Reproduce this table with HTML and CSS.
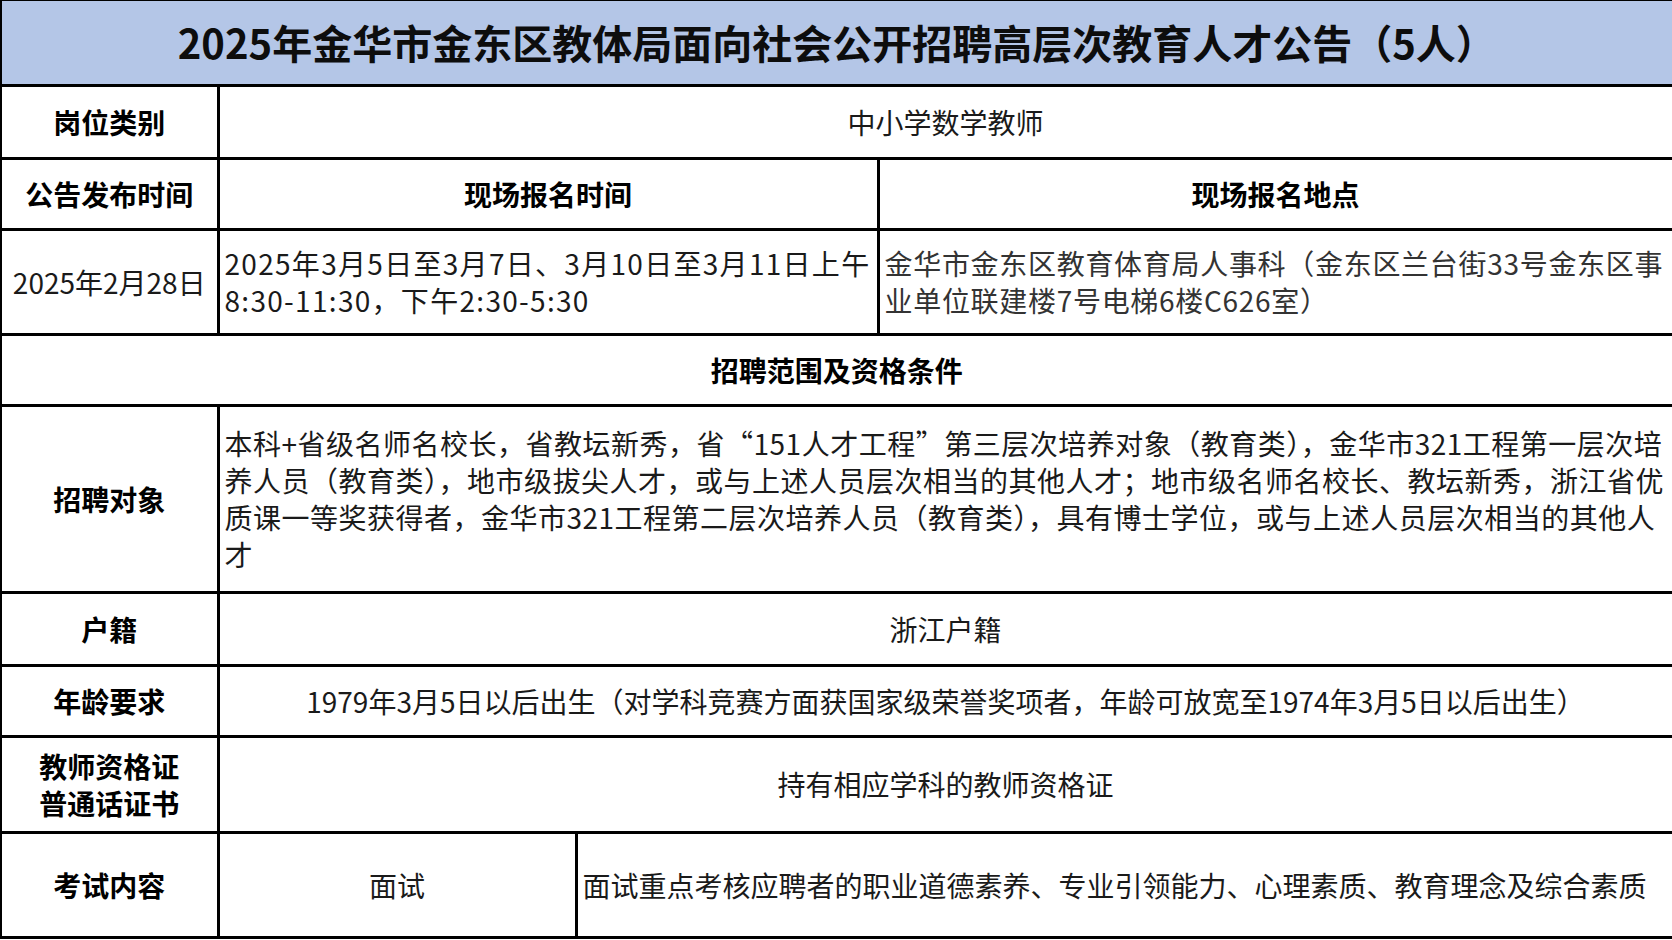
FILE: index.html
```html
<!DOCTYPE html>
<html lang="zh-CN">
<head>
<meta charset="utf-8">
<title>2025年金华市金东区教体局面向社会公开招聘高层次教育人才公告（5人）</title>
<link rel="stylesheet" href="styles.css">
</head>
<body>
<table class="notice">
  <colgroup>
    <col class="c1">
    <col class="c2">
    <col class="c3">
    <col class="c4">
  </colgroup>
  <tr class="r-title">
    <td colspan="4" class="title">2025年金华市金东区教体局面向社会公开招聘高层次教育人才公告（5人）</td>
  </tr>
  <tr class="r-post">
    <td class="label">岗位类别</td>
    <td colspan="3" class="center">中小学数学教师</td>
  </tr>
  <tr class="r-head">
    <td class="label">公告发布时间</td>
    <td colspan="2" class="label">现场报名时间</td>
    <td class="label">现场报名地点</td>
  </tr>
  <tr class="r-dates">
    <td class="center">2025年2月28日</td>
    <td colspan="2" class="text dates">2025年3月5日至3月7日、3月10日至3月11日上午<br>8:30-11:30，下午2:30-5:30</td>
    <td class="text addr">金华市金东区教育体育局人事科（金东区兰台街33号金东区事<br>业单位联建楼7号电梯6楼C626室）</td>
  </tr>
  <tr class="r-section">
    <td colspan="4" class="label">招聘范围及资格条件</td>
  </tr>
  <tr class="r-target">
    <td class="label">招聘对象</td>
    <td colspan="3" class="text target">本科+省级名师名校长，省教坛新秀，省“151人才工程”第三层次培养对象（教育类），金华市321工程第一层次培<br>养人员（教育类），地市级拔尖人才，或与上述人员层次相当的其他人才；地市级名师名校长、教坛新秀，浙江省优<br>质课一等奖获得者，金华市321工程第二层次培养人员（教育类），具有博士学位，或与上述人员层次相当的其他人<br>才</td>
  </tr>
  <tr class="r-hukou">
    <td class="label">户籍</td>
    <td colspan="3" class="center">浙江户籍</td>
  </tr>
  <tr class="r-age">
    <td class="label">年龄要求</td>
    <td colspan="3" class="center">1979年3月5日以后出生（对学科竞赛方面获国家级荣誉奖项者，年龄可放宽至1974年3月5日以后出生）</td>
  </tr>
  <tr class="r-cert">
    <td class="label">教师资格证<br>普通话证书</td>
    <td colspan="3" class="center">持有相应学科的教师资格证</td>
  </tr>
  <tr class="r-exam">
    <td class="label">考试内容</td>
    <td class="center">面试</td>
    <td colspan="2" class="text">面试重点考核应聘者的职业道德素养、专业引领能力、心理素质、教育理念及综合素质</td>
  </tr>
</table>
</body>
</html>
```

FILE: styles.css
```css
html, body {
  margin: 0;
  padding: 0;
  background: #ffffff;
}

body {
  font-family: "Noto Sans CJK SC", "Noto Sans", sans-serif;
  color: #1a1a1a;
}

.notice {
  width: 1672px;
  border-collapse: collapse;
  table-layout: fixed;
}

.c1 { width: 217px; }
.c2 { width: 358px; }
.c3 { width: 302px; }
.c4 { width: 795px; }

.notice td {
  border: 3px solid #000;
  padding: 0 5px;
  font-size: 28px;
  line-height: 37px;
  vertical-align: middle;
  overflow: hidden;
}

.notice tr td:first-child {
  border-left: 2px solid #000;
}

.r-title td {
  border-top: 1px solid #000;
}

.title {
  background: #b4c6e7;
  text-align: center;
  font-weight: 700;
  font-size: 40px !important;
  line-height: 48px;
  color: #0d0d0d;
}

.label {
  text-align: center;
  font-weight: 700;
  color: #000;
}

.center {
  text-align: center;
}

.text {
  text-align: left;
  white-space: nowrap;
}

.dates {
  letter-spacing: 1.3px;
}

.addr {
  color: #333;
  letter-spacing: 0.7px;
}

.target {
  letter-spacing: 0.5px;
}

.r-title { height: 85px; }
.r-post { height: 73px; }
.r-head { height: 71px; }
.r-dates { height: 105px; }
.r-section { height: 71px; }
.r-target { height: 187px; }
.r-hukou { height: 73px; }
.r-age { height: 71px; }
.r-cert { height: 96px; }
.r-exam { height: 105px; }
```
